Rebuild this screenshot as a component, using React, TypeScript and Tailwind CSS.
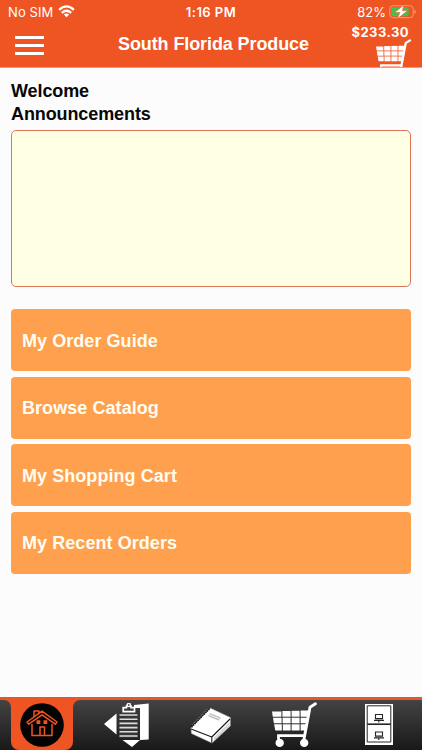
const menuItems = ['My Order Guide', 'Browse Catalog', 'My Shopping Cart', 'My Recent Orders'];

function WifiIcon() {
  return (
    <svg className="ml-[5px] mt-[5px] h-[13px] w-[17px] shrink-0" viewBox="0 0 17 13" fill="none" stroke="white" strokeWidth="2.3">
      <path d="M1.1 4.8Q8.5 -2 15.9 4.8" />
      <path d="M3.8 7.9Q8.5 3.7 13.2 7.9" />
      <path d="M8.5 12.3L5.8 9.6Q8.5 7.4 11.2 9.6Z" fill="white" stroke="none" />
    </svg>
  );
}

function BatteryIcon() {
  return (
    <svg className="ml-[3px] mt-[5px] h-[14px] w-[28px] shrink-0" viewBox="0 0 28 14">
      <rect x="0.7" y="0.7" width="23.6" height="12" rx="3.5" fill="none" stroke="#fa9a78" />
      <path d="M25.8 5Q27.4 6.8 25.8 8.6Z" fill="#fa9a78" stroke="#fa9a78" strokeWidth="0.5" />
      <rect x="2.2" y="2.2" width="17.5" height="9" rx="2" fill="#43c04f" />
      <path d="M15 -0.2L5.6 7.6H10.8L8.4 13.8L18.8 5.6H13.4Z" fill="white" stroke="#ef5423" strokeWidth="0.6" />
    </svg>
  );
}

function CartIcon({ className }: { className: string }) {
  return (
    <svg className={className} viewBox="0 0 46 46" fill="none" stroke="white">
      <g fill="white" stroke="none">
        <path d="M0 9.5H9.4V14.7H.8Z" />
        <path d="M10.4 9H18.6V14.7H10.4Z" />
        <path d="M19.6 8.8H27.6V14.7H19.6Z" />
        <path d="M28.6 8.5H37.4L36.6 14.7H28.6Z" />
        <path d="M1 15.7H9.6V21.3H1.9Z" />
        <path d="M10.6 15.7H18.6V21.3H10.6Z" />
        <path d="M19.6 15.7H27.6V21.3H19.6Z" />
        <path d="M28.6 15.7H36.5L35.6 21.3H28.6Z" />
        <path d="M2.1 22.3H9.8V28.5H3.3Z" />
        <path d="M10.8 22.3H18.6V28.5H10.8Z" />
        <path d="M19.6 22.3H27.6V28.5H19.6Z" />
        <path d="M28.6 22.3H35.5L34.4 28.5H28.6Z" />
        <circle cx="7.7" cy="40.9" r="4.2" />
        <circle cx="32.2" cy="40.9" r="4.2" />
      </g>
      <path d="M32 37L38 5.2L43.4 1.8" strokeWidth="2.9" strokeLinecap="round" strokeLinejoin="round" />
      <path d="M6.5 37.5V33.6H32.5" strokeWidth="2.8" />
    </svg>
  );
}

function HouseIcon() {
  return (
    <svg className="h-[44px] w-[44px] shrink-0" viewBox="0 0 44 44" fill="none" stroke="#ef5423" strokeWidth="1.5" strokeLinejoin="round">
      <circle cx="22" cy="22" r="21.8" fill="#030303" stroke="none" />
      <path d="M12 21V32.5H32V21" />
      <path d="M14 15V8H19V12" />
      <path d="M7 19L22 8.2L37 19L35.3 21.2L22 11.8L8.7 21.2Z" fill="#030303" />
      <path d="M16.5 17.2H20.3V21H16.5ZM23.5 17.2H27.3V21H23.5Z" fill="#ef5423" stroke="none" />
      <path d="M20 32.5V24H24.5V32.5" />
    </svg>
  );
}

function GuideIcon() {
  return (
    <svg className="h-[46px] w-[46px]" viewBox="0 0 46 46">
      <path d="M12.5 10.5V31.5L0 21Z" fill="white" />
      <path d="M30 2L44.7 0.6V36.5L36 37L28 44L18.5 37H36V5H30Z" fill="white" />
      <path d="M15 8H34V34.8H15Z" fill="#353535" />
      <path d="M15.5 12H33.5M15.5 16.2H33.5M15.5 20.4H33.5M15.5 24.6H33.5M15.5 28.8H33.5M15.5 33H33.5" stroke="#dddddd" strokeWidth="1.6" />
      <path d="M19.2 4.7H22.5V3H27V4.7H30.5V8.7H19.2Z" fill="#3c3c3c" stroke="white" strokeWidth="1.7" />
      <circle cx="24.8" cy="2" r="1.6" fill="#555555" stroke="white" strokeWidth="1.4" />
    </svg>
  );
}

function BookIcon() {
  return (
    <svg className="h-[38px] w-[42px]" viewBox="0 0 42 38" strokeLinejoin="round">
      <path d="M1 21L20.5 1.2L40.3 10.5V19L22 36L1.5 26.5Z" fill="white" stroke="#bbbbbb" strokeWidth="0.5" />
      <path d="M1 22L21.8 30L40 12M21.8 30V35.8" fill="none" stroke="#191919" strokeWidth="1.1" />
      <path d="M24.2 33L39.5 18.2M24 31.4L39.5 16.2" stroke="#999999" strokeWidth="0.7" />
      <path d="M1.5 20L19.5 1.5" stroke="#191919" strokeWidth="1.9" strokeDasharray="1.2 1" />
      <path d="M2.5 17.5L17.8 1.5" stroke="#aaaaaa" strokeWidth="0.8" strokeDasharray="1.2 1" />
      <path d="M19.4 6.7L30.7 11.2M18.5 8.7L29.3 13" stroke="#bdbdbd" strokeWidth="1.4" />
    </svg>
  );
}

function CabinetIcon() {
  return (
    <svg className="h-[41px] w-[28px]" viewBox="0 0 28 41" fill="none" stroke="#252525">
      <path d="M0 0H28V41H0Z" fill="white" stroke="none" />
      <path d="M2.2 1.8H25.8V38H2.2Z" strokeWidth="1" />
      <path d="M2.2 20.2H25.8" strokeWidth="1.6" />
      <path d="M10.5 10.5H17.5V14.6H10.5ZM9 16.4H19M13.8 16.4V18.5M10.5 28H17.5V32.1H10.5ZM9 33.9H19M13.8 33.9V36" strokeWidth="1.1" />
    </svg>
  );
}

export default function App() {
  return (
    <div className="flex h-[750px] w-[422px] flex-col overflow-hidden bg-[#fcfcfc] font-['Liberation_Sans',sans-serif]">
      <header className="h-[68px] shrink-0 border-b border-[#fa9574] bg-[#ef5423] text-white">
        <div className="grid h-6 grid-cols-3 font-['Inter',sans-serif] text-[13px] leading-6">
          <div className="flex pl-[8px]"><span className="tracking-[0.1px]">No SIM</span><WifiIcon /></div>
          <div className="text-center font-semibold tracking-[0.45px]">1:16 PM</div>
          <div className="flex justify-end pr-[5px]"><span>82%</span><BatteryIcon /></div>
        </div>
        <div className="grid h-[43px] grid-cols-[104px_1fr_104px]">
          <button aria-label="Menu" className="ml-[15px] mt-[12px] flex h-[19px] w-[29px] flex-col justify-between">
            <span className="h-[3px] w-full bg-white" /><span className="h-[3px] w-full bg-white" /><span className="h-[3px] w-full bg-white" />
          </button>
          <h1 className="whitespace-nowrap pl-[5px] pt-[8px] text-center text-[18px] font-bold leading-6 tracking-[-0.1px]">South Florida Produce</h1>
          <div className="flex flex-col items-end overflow-hidden">
            <div className="mr-[13px] h-[15px] font-['Inter',sans-serif] text-[13px] font-bold leading-4 tracking-[0.45px]">$233.30</div>
            <CartIcon className="mr-[10px] h-[36px] w-[36px] shrink-0" />
          </div>
        </div>
      </header>

      <main className="flex-1 px-[11px] pt-[12px]">
        <h2 className="text-[18px] font-bold leading-[22.5px] tracking-[-0.1px] text-[#080808]">Welcome<br />Announcements</h2>
        <section className="mt-[4.5px] h-[157.5px] rounded-[5px] border border-[#dc7658] bg-[#ffffe4]" />
        <nav className="mt-[22px] flex flex-col gap-[5.5px]">
          {menuItems.map((item) => (
            <button key={item} className="h-[62px] rounded-[4px] bg-[#ffa04f] px-[11px] pt-[2px] text-left text-[18px] font-bold tracking-[0.06px] text-[#fffdf1]">{item}</button>
          ))}
        </nav>
      </main>

      <footer className="grid h-[53px] shrink-0 grid-cols-5 border-t-[3px] border-[#e95428] bg-gradient-to-b from-[#444444] to-[#191919]">
        <button aria-label="Home" className="flex bg-[#ef5423]">
          <span className="h-full w-[11px] rounded-tr-[7px] bg-gradient-to-b from-[#444444] to-[#191919]" />
          <span className="flex flex-1 justify-center overflow-hidden bg-gradient-to-b from-[#444444] to-[#191919]">
            <span className="flex h-full w-full justify-center rounded-b-[8px] bg-[#ef5423] pt-[3px]"><HouseIcon /></span>
          </span>
          <span className="h-full w-[11px] rounded-tl-[7px] bg-gradient-to-b from-[#444444] to-[#191919]" />
        </button>
        <button aria-label="Order guide" className="flex justify-center pt-[3px]"><GuideIcon /></button>
        <button aria-label="Catalog" className="flex justify-center pt-[7px]"><BookIcon /></button>
        <button aria-label="Shopping cart" className="flex justify-center pt-[2px]"><CartIcon className="h-[46px] w-[46px]" /></button>
        <button aria-label="Recent orders" className="flex justify-center pr-[1px] pt-[4px]"><CabinetIcon /></button>
      </footer>
    </div>
  );
}
